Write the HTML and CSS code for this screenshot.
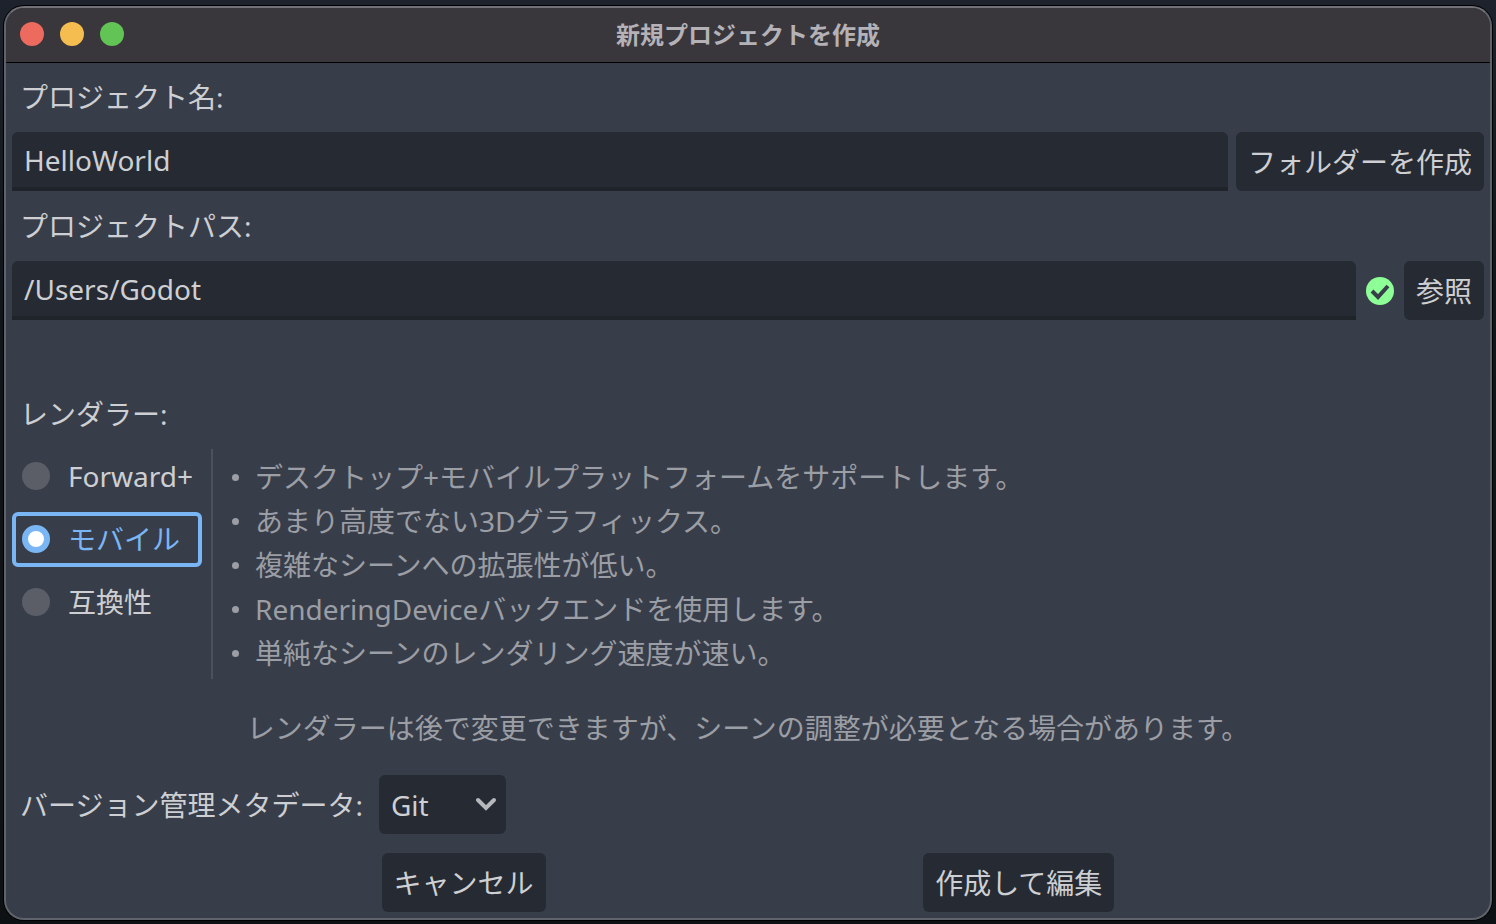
FILE: index.html
```
<!DOCTYPE html>
<html lang="ja">
<head>
  <meta charset="UTF-8" />
  <meta name="viewport" content="width=device-width, initial-scale=1" />
  <title>新規プロジェクトを作成</title>
  <link rel="stylesheet" href="styles.css">
</head>
<body>
  <div class="window">
    <header class="titlebar">
      <div class="lights">
        <button class="light close" type="button" aria-label="閉じる"></button>
        <button class="light minimize" type="button" aria-label="最小化"></button>
        <button class="light zoom" type="button" aria-label="拡大"></button>
      </div>
      <h1>新規プロジェクトを作成</h1>
    </header>

    <form class="content">
      <label class="caption" for="projectName">プロジェクト名:</label>
      <div class="row">
        <input class="text" type="text" id="projectName" value="HelloWorld" />
        <button class="button" type="button">フォルダーを作成</button>
      </div>

      <label class="caption" for="projectPath">プロジェクトパス:</label>
      <div class="row">
        <input class="text" type="text" id="projectPath" value="/Users/Godot" />
        <svg class="status" viewBox="0 0 28 28" aria-hidden="true">
          <circle cx="14" cy="14" r="14" fill="#8eff97" />
          <path d="M6 14l6 6 10-11" fill="none" stroke="#383d4a" stroke-width="4" />
        </svg>
        <button class="button" type="button">参照</button>
      </div>

      <div class="caption renderer-caption" id="rendererLabel">レンダラー:</div>
      <div class="renderer">
        <div class="options" role="radiogroup" aria-labelledby="rendererLabel">
          <label class="option"><input type="radio" name="renderer" value="forward" />Forward+</label>
          <label class="option"><input type="radio" name="renderer" value="mobile" checked />モバイル</label>
          <label class="option"><input type="radio" name="renderer" value="compat" />互換性</label>
        </div>
        <ul class="features">
          <li>デスクトップ+モバイルプラットフォームをサポートします。</li>
          <li>あまり高度でない3Dグラフィックス。</li>
          <li>複雑なシーンへの拡張性が低い。</li>
          <li>RenderingDeviceバックエンドを使用します。</li>
          <li>単純なシーンのレンダリング速度が速い。</li>
        </ul>
      </div>
      <p class="note">レンダラーは後で変更できますが、シーンの調整が必要となる場合があります。</p>

      <div class="row">
        <label class="caption" for="vcs">バージョン管理メタデータ:</label>
        <div class="dropdown">
          <select id="vcs">
            <option>Git</option>
          </select>
          <svg class="arrow" viewBox="0 0 24 24" aria-hidden="true">
            <path d="M4 9l8 8 8-8" fill="none" stroke="#b6b8bb" stroke-width="4" stroke-linecap="round" />
          </svg>
        </div>
      </div>

      <div class="actions">
        <button class="button" type="button">キャンセル</button>
        <button class="button" type="submit">作成して編集</button>
      </div>
    </form>
  </div>
</body>
</html>
```
FILE: styles.css
```
* {
  box-sizing: border-box;
}

body {
  margin: 0;
  min-height: 100vh;
  padding: 6px 4px 4px;
  display: flex;
  background: linear-gradient(#1d222c, #11161a 30%, #0e1113);
  color: #cdcfd2;
  font-family: "Noto Sans", "Noto Sans CJK JP", sans-serif;
  font-size: 28px;
  line-height: 38px;
}

input, select, button {
  font: inherit;
  color: inherit;
}

.window {
  flex: 1;
  display: flex;
  flex-direction: column;
  background-color: #383d4a;
  border: 2px solid #5f636c;
  border-top-color: #737278;
  border-radius: 20px;
  box-shadow: 0 0 0 1px #000;
  overflow: hidden;
}

.titlebar {
  display: grid;
  grid-template-columns: 1fr auto 1fr;
  align-items: center;
  height: 55px;
  padding: 0 14px 3px;
  background-color: #39373c;
  border-bottom: 1px solid #000;
}

.titlebar h1 {
  margin: 0;
  color: #b4b2b7;
  font-family: "Noto Sans CJK JP", sans-serif;
  font-size: 24px;
  font-weight: bold;
  line-height: 36px;
}

.lights {
  display: flex;
  gap: 16px;
}

.light {
  width: 24px;
  height: 24px;
  padding: 0;
  border: none;
  border-radius: 50%;
}

.close { background-color: #ed6a5e; }
.minimize { background-color: #f5bd4f; }
.zoom { background-color: #61c454; }

.content {
  flex: 1;
  display: flex;
  flex-direction: column;
  gap: 8px;
  padding: 7px 6px 6px;
}

.caption {
  padding: 8px;
}

.row {
  display: flex;
  align-items: center;
  gap: 8px;
}

.text {
  flex: 1;
  min-width: 0;
  height: 59px;
  padding: 0 12px;
  background-color: #262a33;
  border: none;
  border-bottom: 4px solid #1f232a;
  border-radius: 6px 6px 0 0;
  outline: none;
}

.button {
  height: 59px;
  padding: 0 12px;
  background-color: #262a33;
  border: none;
  border-radius: 6px;
}

.status {
  width: 28px;
  height: 28px;
  margin: 0 2px;
}

.renderer-caption {
  margin-top: 59px;
}

.renderer {
  display: flex;
}

.options {
  display: flex;
  flex-direction: column;
  gap: 8px;
  width: 190px;
}

.option {
  display: flex;
  align-items: center;
  gap: 18px;
  height: 55px;
  padding: 0 6px 2px;
  border: 4px solid transparent;
  border-radius: 6px;
  white-space: nowrap;
}

.option input {
  appearance: none;
  flex-shrink: 0;
  width: 28px;
  height: 28px;
  margin: 0;
  border-radius: 50%;
  background-color: #5b5e67;
}

.option:has(input:checked) {
  border-color: #7ab6f4;
  color: #7ab6f4;
}

.option input:checked {
  background-color: #fff;
  border: 6px solid #7ab6f4;
}

.features {
  flex: 1;
  margin: 0 0 0 9px;
  padding: 6px 0 4px 19px;
  border-left: 2px solid #4c515d;
  color: #9b9ea4;
  line-height: 44px;
  list-style: none;
}

.features li {
  display: flex;
  align-items: center;
  gap: 16px;
}

.features li::before {
  content: "";
  width: 7px;
  height: 7px;
  border-radius: 50%;
  background-color: #9b9ea4;
}

.note {
  margin: 0;
  padding: 22px 0 20px;
  color: #9b9ea4;
  text-align: center;
}

.dropdown {
  position: relative;
}

.dropdown select {
  appearance: none;
  width: 127px;
  height: 59px;
  padding: 0 12px;
  background-color: #262a33;
  border: none;
  border-radius: 6px;
}

/* the arrow sits on top of the select */
.arrow {
  position: absolute;
  top: 16px;
  right: 8px;
  width: 24px;
  height: 24px;
  pointer-events: none;
}

.actions {
  display: flex;
  justify-content: space-evenly;
  gap: 8px;
  margin-top: auto;
}
```
